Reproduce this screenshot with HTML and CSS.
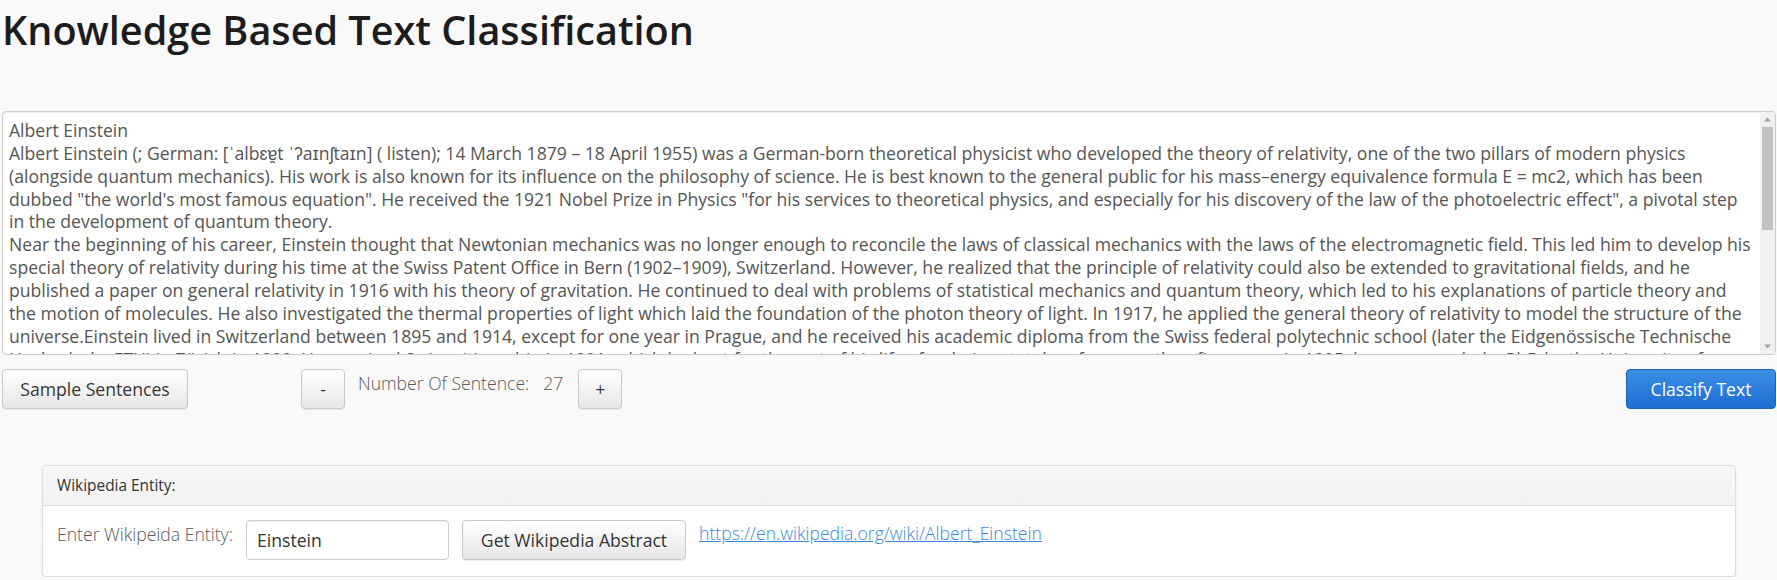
FILE: index.html
```html
<!DOCTYPE html>
<html lang="en">
<head>
<meta charset="utf-8">
<title>Knowledge Based Text Classification</title>
<link rel="stylesheet" href="styles.css">
</head>
<body>
<div class="page">
  <h1 class="title">Knowledge Based Text Classification</h1>
  <div class="editor">
  <textarea class="text-input" wrap="off" spellcheck="false">Albert Einstein
Albert Einstein (; German: [ˈalbɛɐ̯t ˈʔaɪnʃtaɪn] ( listen); 14 March 1879 – 18 April 1955) was a German-born theoretical physicist who developed the theory of relativity, one of the two pillars of modern physics
(alongside quantum mechanics). His work is also known for its influence on the philosophy of science. He is best known to the general public for his mass–energy equivalence formula E = mc2, which has been
dubbed "the world's most famous equation". He received the 1921 Nobel Prize in Physics "for his services to theoretical physics, and especially for his discovery of the law of the photoelectric effect", a pivotal step
in the development of quantum theory.
Near the beginning of his career, Einstein thought that Newtonian mechanics was no longer enough to reconcile the laws of classical mechanics with the laws of the electromagnetic field. This led him to develop his
special theory of relativity during his time at the Swiss Patent Office in Bern (1902–1909), Switzerland. However, he realized that the principle of relativity could also be extended to gravitational fields, and he
published a paper on general relativity in 1916 with his theory of gravitation. He continued to deal with problems of statistical mechanics and quantum theory, which led to his explanations of particle theory and
the motion of molecules. He also investigated the thermal properties of light which laid the foundation of the photon theory of light. In 1917, he applied the general theory of relativity to model the structure of the
universe.Einstein lived in Switzerland between 1895 and 1914, except for one year in Prague, and he received his academic diploma from the Swiss federal polytechnic school (later the Eidgenössische Technische
Hochschule, ETH) in Zürich in 1900. He acquired Swiss citizenship in 1901, which he kept for the rest of his life after being stateless for more than five years. In 1905, he was awarded a PhD by the University of
Zurich. The same year, he published four groundbreaking papers during his renowned annus mirabilis (miracle year) which brought him to the notice of the academic world
at the age of 26. He taught theoretical physics at Zurich between 1912 and 1914 before he left for Berlin, where he was elected to the Prussian Academy of Sciences.
In 1933, while Einstein was visiting the United States, Adolf Hitler came to power. Because of his Jewish background, Einstein did not return to Germany. He settled in the United States and became an
American citizen in 1940. On the eve of World War II, he endorsed a letter to President Franklin D. Roosevelt alerting him to the potential development of "extremely powerful bombs of a new type" and
recommending that the US begin similar research. This eventually led to the Manhattan Project. Einstein supported the Allies, but he generally denounced the idea of using nuclear fission as a weapon.
He signed the Russell–Einstein Manifesto with British philosopher Bertrand Russell, which highlighted the danger of nuclear weapons. He was affiliated with the Institute for Advanced Study in Princeton,
New Jersey, until his death in 1955.
Einstein published more than 300 scientific papers and more than 150 non-scientific works. His intellectual achievements and originality have made the word "Einstein" synonymous with "genius".</textarea>
    <div class="scrollbar" aria-hidden="true">
      <div class="sb-arrow">
        <svg width="15" height="15" viewBox="0 0 15 15"><path d="M4 9.5 L7.5 5.5 L11 9.5 Z" fill="#a3a3a3"/></svg>
      </div>
      <div class="sb-track"><div class="sb-thumb"></div></div>
      <div class="sb-arrow">
        <svg width="15" height="15" viewBox="0 0 15 15"><path d="M4 5.5 L7.5 9.5 L11 5.5 Z" fill="#a3a3a3"/></svg>
      </div>
    </div>
  </div>

  <div class="controls">
    <button class="btn btn-default btn-sample">Sample Sentences</button>
    <button class="btn btn-default btn-step btn-minus">-</button>
    <span class="count-label">Number Of Sentence:<span class="count-value">27</span></span>
    <button class="btn btn-default btn-step btn-plus">+</button>
    <button class="btn btn-primary btn-classify">Classify Text</button>
  </div>

  <div class="panel">
    <div class="panel-heading">Wikipedia Entity:</div>
    <div class="panel-body">
      <label class="entity-label" for="entity">Enter Wikipeida Entity:</label>
      <input id="entity" class="entity-input" type="text" value="Einstein">
      <button class="btn btn-default btn-abstract">Get Wikipedia Abstract</button>
      <a class="entity-link" href="#">https://en.wikipedia.org/wiki/Albert_Einstein</a>
    </div>
  </div>
</div>
</body>
</html>
```
FILE: styles.css
```css
html, body {
  margin: 0;
  padding: 0;
}

body {
  background: #f9f9f9;
  font-family: "Open Sans", "Liberation Sans", sans-serif;
  font-size: 17.6px;
  color: #333;
}

.page {
  padding: 0 1px 0 2px;
}

.title {
  margin: 6px 0 0 0;
  font-size: 39.6px;
  line-height: 48px;
  font-weight: 600;
  color: #1c1c1c;
}

.editor {
  display: flex;
  box-sizing: border-box;
  height: 244px;
  margin-top: 57px;
  border: 1px solid #ccc;
  border-radius: 4px;
  background: #fff;
  box-shadow: inset 0 1px 1px rgba(0,0,0,.075);
  overflow: hidden;
}

.text-input {
  flex: 1;
  min-width: 0;
  box-sizing: border-box;
  height: 100%;
  margin: 0;
  padding: 7px 6px 6px;
  border: 0;
  outline: none;
  background: transparent;
  font-family: "Open Sans", "Liberation Sans", sans-serif;
  font-size: 17.6px;
  line-height: 22.86px;
  color: #555;
  resize: none;
  white-space: pre;
  overflow: hidden;
}

.scrollbar {
  display: flex;
  flex-direction: column;
  width: 15px;
  background: #f1f1f1;
}

.sb-arrow {
  height: 15px;
  line-height: 0;
}

.sb-track {
  flex: 1;
  padding: 0 2px;
}

.sb-thumb {
  height: 103px;
  background: #c1c1c1;
}

.controls {
  display: flex;
  align-items: flex-start;
  margin-top: 14px;
}

.btn {
  box-sizing: border-box;
  height: 40px;
  padding: 0 17px;
  border: 1px solid #ccc;
  border-radius: 4px;
  font-family: "Open Sans", "Liberation Sans", sans-serif;
  font-size: 17.6px;
  line-height: 38px;
  cursor: pointer;
}

.btn-default {
  color: #333;
  background: linear-gradient(to bottom, #ffffff 0%, #e6e6e6 100%);
  border-color: #c8c8c8;
  box-shadow: 0 1px 1px rgba(0,0,0,.075);
  text-shadow: 0 1px 0 #fff;
}

.btn-primary {
  color: #fff;
  background: linear-gradient(to bottom, #3b8fe6 0%, #1e6dd3 100%);
  border-color: #1b62c0;
}

.btn-sample {
  width: 186px;
  padding: 0;
}

.btn-step {
  width: 44px;
  padding: 0;
}

.btn-minus {
  margin-left: 113px;
}

.count-label {
  margin-left: 13px;
  padding-top: 2px;
  font-weight: 300;
  line-height: 24px;
  color: #5a5a5a;
}

.count-value {
  margin-left: 14px;
}

.btn-plus {
  margin-left: 15px;
}

.btn-classify {
  margin-left: auto;
  width: 150px;
  padding: 0;
}

.panel {
  margin: 56px 40px 0;
  border: 1px solid #ddd;
  border-radius: 4px;
  background: #fff;
  box-shadow: 0 1px 2px rgba(0,0,0,.08);
}

.panel-heading {
  padding: 0 14px;
  height: 39px;
  line-height: 39px;
  border-bottom: 1px solid #ddd;
  border-radius: 4px 4px 0 0;
  background: linear-gradient(to bottom, #f7f7f7 0%, #f2f2f2 100%);
  font-size: 15.4px;
  color: #333;
}

.panel-body {
  display: flex;
  align-items: flex-start;
  padding: 14px 14px 16px;
}

.entity-label {
  width: 175px;
  padding-top: 2px;
  font-weight: 300;
  line-height: 24px;
  white-space: nowrap;
  color: #5a5a5a;
}

.entity-input {
  box-sizing: border-box;
  width: 203px;
  height: 40px;
  margin-left: 14px;
  padding: 0 10px;
  border: 1px solid #ccc;
  border-radius: 4px;
  font-family: "Open Sans", "Liberation Sans", sans-serif;
  font-size: 17.6px;
  color: #333;
  box-shadow: inset 0 1px 1px rgba(0,0,0,.075);
}

.btn-abstract {
  width: 224px;
  margin-left: 13px;
  padding: 0;
}

.entity-link {
  margin-left: 13px;
  padding-top: 1px;
  font-weight: 300;
  line-height: 24px;
  color: #3d87e0;
}
```
